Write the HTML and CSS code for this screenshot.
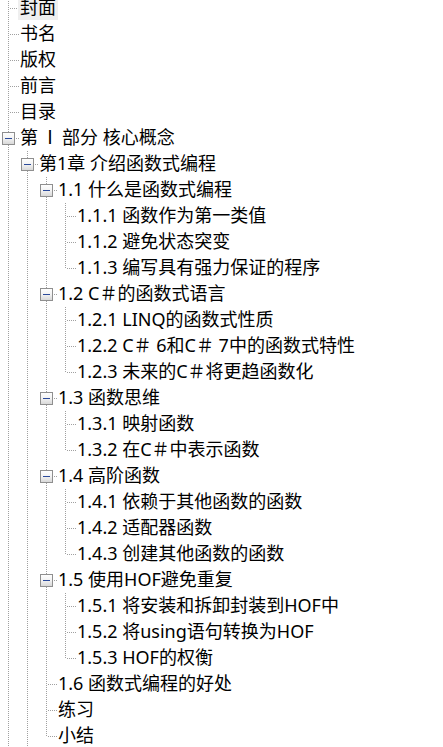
FILE: index.html
```html
<!DOCTYPE html>
<html lang="zh-CN">
<head>
<meta charset="utf-8">
<title>目录树</title>
<link rel="stylesheet" href="styles.css">
</head>
<body>
<svg class="defs" width="0" height="0" aria-hidden="true">
  <defs>
    <linearGradient id="boxfill" x1="0" y1="0" x2="0" y2="1">
      <stop offset="0" stop-color="#ffffff"/>
      <stop offset="0.5" stop-color="#f2f2f2"/>
      <stop offset="1" stop-color="#d6d6d6"/>
    </linearGradient>
    <symbol id="pipe" viewBox="0 0 19 26">
      <line x1="8.5" y1="0" x2="8.5" y2="26" class="dot"/>
    </symbol>
    <symbol id="tee" viewBox="0 0 19 26">
      <line x1="8.5" y1="0" x2="8.5" y2="26" class="dot"/>
      <line x1="10" y1="13.5" x2="19" y2="13.5" class="dot"/>
    </symbol>
    <symbol id="last" viewBox="0 0 19 26">
      <line x1="8.5" y1="0" x2="8.5" y2="14" class="dot"/>
      <line x1="10" y1="13.5" x2="19" y2="13.5" class="dot"/>
    </symbol>
    <symbol id="box" viewBox="0 0 19 26">
      <line x1="8.5" y1="0" x2="8.5" y2="26" class="dot"/>
      <line x1="16" y1="13.5" x2="19" y2="13.5" class="dot"/>
      <rect x="2.5" y="7.5" width="12" height="12" fill="url(#boxfill)" stroke="#8f8f8f" stroke-width="1"/>
      <line x1="5" y1="13.5" x2="12" y2="13.5" stroke="#2b4a9a" stroke-width="1"/>
    </symbol>
  </defs>
</svg>

<div class="tree">
  <div class="row"><svg class="g"><use href="#tee"/></svg><span class="label sel">封面</span></div>
  <div class="row"><svg class="g"><use href="#tee"/></svg><span class="label">书名</span></div>
  <div class="row"><svg class="g"><use href="#tee"/></svg><span class="label">版权</span></div>
  <div class="row"><svg class="g"><use href="#tee"/></svg><span class="label">前言</span></div>
  <div class="row"><svg class="g"><use href="#tee"/></svg><span class="label">目录</span></div>
  <div class="row"><svg class="g"><use href="#box"/></svg><span class="label">第<span class="roman">Ⅰ</span>部分 核心概念</span></div>
  <div class="row"><svg class="g"><use href="#pipe"/></svg><svg class="g"><use href="#box"/></svg><span class="label">第1章 介绍函数式编程</span></div>
  <div class="row"><svg class="g"><use href="#pipe"/></svg><svg class="g"><use href="#pipe"/></svg><svg class="g"><use href="#box"/></svg><span class="label">1.1 什么是函数式编程</span></div>
  <div class="row"><svg class="g"><use href="#pipe"/></svg><svg class="g"><use href="#pipe"/></svg><svg class="g"><use href="#pipe"/></svg><svg class="g"><use href="#tee"/></svg><span class="label">1.1.1 函数作为第一类值</span></div>
  <div class="row"><svg class="g"><use href="#pipe"/></svg><svg class="g"><use href="#pipe"/></svg><svg class="g"><use href="#pipe"/></svg><svg class="g"><use href="#tee"/></svg><span class="label">1.1.2 避免状态突变</span></div>
  <div class="row"><svg class="g"><use href="#pipe"/></svg><svg class="g"><use href="#pipe"/></svg><svg class="g"><use href="#pipe"/></svg><svg class="g"><use href="#last"/></svg><span class="label">1.1.3 编写具有强力保证的程序</span></div>
  <div class="row"><svg class="g"><use href="#pipe"/></svg><svg class="g"><use href="#pipe"/></svg><svg class="g"><use href="#box"/></svg><span class="label">1.2 C＃的函数式语言</span></div>
  <div class="row"><svg class="g"><use href="#pipe"/></svg><svg class="g"><use href="#pipe"/></svg><svg class="g"><use href="#pipe"/></svg><svg class="g"><use href="#tee"/></svg><span class="label">1.2.1 LINQ的函数式性质</span></div>
  <div class="row"><svg class="g"><use href="#pipe"/></svg><svg class="g"><use href="#pipe"/></svg><svg class="g"><use href="#pipe"/></svg><svg class="g"><use href="#tee"/></svg><span class="label">1.2.2 C＃ 6和C＃ 7中的函数式特性</span></div>
  <div class="row"><svg class="g"><use href="#pipe"/></svg><svg class="g"><use href="#pipe"/></svg><svg class="g"><use href="#pipe"/></svg><svg class="g"><use href="#last"/></svg><span class="label">1.2.3 未来的C＃将更趋函数化</span></div>
  <div class="row"><svg class="g"><use href="#pipe"/></svg><svg class="g"><use href="#pipe"/></svg><svg class="g"><use href="#box"/></svg><span class="label">1.3 函数思维</span></div>
  <div class="row"><svg class="g"><use href="#pipe"/></svg><svg class="g"><use href="#pipe"/></svg><svg class="g"><use href="#pipe"/></svg><svg class="g"><use href="#tee"/></svg><span class="label">1.3.1 映射函数</span></div>
  <div class="row"><svg class="g"><use href="#pipe"/></svg><svg class="g"><use href="#pipe"/></svg><svg class="g"><use href="#pipe"/></svg><svg class="g"><use href="#last"/></svg><span class="label">1.3.2 在C＃中表示函数</span></div>
  <div class="row"><svg class="g"><use href="#pipe"/></svg><svg class="g"><use href="#pipe"/></svg><svg class="g"><use href="#box"/></svg><span class="label">1.4 高阶函数</span></div>
  <div class="row"><svg class="g"><use href="#pipe"/></svg><svg class="g"><use href="#pipe"/></svg><svg class="g"><use href="#pipe"/></svg><svg class="g"><use href="#tee"/></svg><span class="label">1.4.1 依赖于其他函数的函数</span></div>
  <div class="row"><svg class="g"><use href="#pipe"/></svg><svg class="g"><use href="#pipe"/></svg><svg class="g"><use href="#pipe"/></svg><svg class="g"><use href="#tee"/></svg><span class="label">1.4.2 适配器函数</span></div>
  <div class="row"><svg class="g"><use href="#pipe"/></svg><svg class="g"><use href="#pipe"/></svg><svg class="g"><use href="#pipe"/></svg><svg class="g"><use href="#last"/></svg><span class="label">1.4.3 创建其他函数的函数</span></div>
  <div class="row"><svg class="g"><use href="#pipe"/></svg><svg class="g"><use href="#pipe"/></svg><svg class="g"><use href="#box"/></svg><span class="label">1.5 使用HOF避免重复</span></div>
  <div class="row"><svg class="g"><use href="#pipe"/></svg><svg class="g"><use href="#pipe"/></svg><svg class="g"><use href="#pipe"/></svg><svg class="g"><use href="#tee"/></svg><span class="label">1.5.1 将安装和拆卸封装到HOF中</span></div>
  <div class="row"><svg class="g"><use href="#pipe"/></svg><svg class="g"><use href="#pipe"/></svg><svg class="g"><use href="#pipe"/></svg><svg class="g"><use href="#tee"/></svg><span class="label">1.5.2 将using语句转换为HOF</span></div>
  <div class="row"><svg class="g"><use href="#pipe"/></svg><svg class="g"><use href="#pipe"/></svg><svg class="g"><use href="#pipe"/></svg><svg class="g"><use href="#last"/></svg><span class="label">1.5.3 HOF的权衡</span></div>
  <div class="row"><svg class="g"><use href="#pipe"/></svg><svg class="g"><use href="#pipe"/></svg><svg class="g"><use href="#tee"/></svg><span class="label">1.6 函数式编程的好处</span></div>
  <div class="row"><svg class="g"><use href="#pipe"/></svg><svg class="g"><use href="#pipe"/></svg><svg class="g"><use href="#tee"/></svg><span class="label">练习</span></div>
  <div class="row"><svg class="g"><use href="#pipe"/></svg><svg class="g"><use href="#pipe"/></svg><svg class="g"><use href="#last"/></svg><span class="label">小结</span></div>
</div>
</body>
</html>
```

FILE: styles.css
```css
html, body {
  margin: 0;
  padding: 0;
  background: #ffffff;
  overflow: hidden;
}

.defs {
  width: 0;
  height: 0;
  overflow: hidden;
  display: block;
}

.dot {
  stroke: #a0a0a0;
  stroke-width: 1;
  stroke-dasharray: 1 1;
  shape-rendering: crispEdges;
}

.tree {
  margin-top: -5px;
  font-family: "Noto Sans", "Noto Sans CJK SC", sans-serif;
  font-size: 18px;
  color: #000000;
}

.row {
  display: flex;
  align-items: stretch;
  height: 26px;
  white-space: nowrap;
}

.g {
  width: 19px;
  height: 26px;
  flex: 0 0 19px;
  display: block;
  shape-rendering: crispEdges;
}

.label {
  display: block;
  line-height: 25px;
  height: 25px;
  padding: 0 2px;
  margin-left: -1px;
}

.label.sel {
  background: #efefef;
}

.roman {
  font-family: "Liberation Serif", serif;
  padding: 0 3px;
}
```
